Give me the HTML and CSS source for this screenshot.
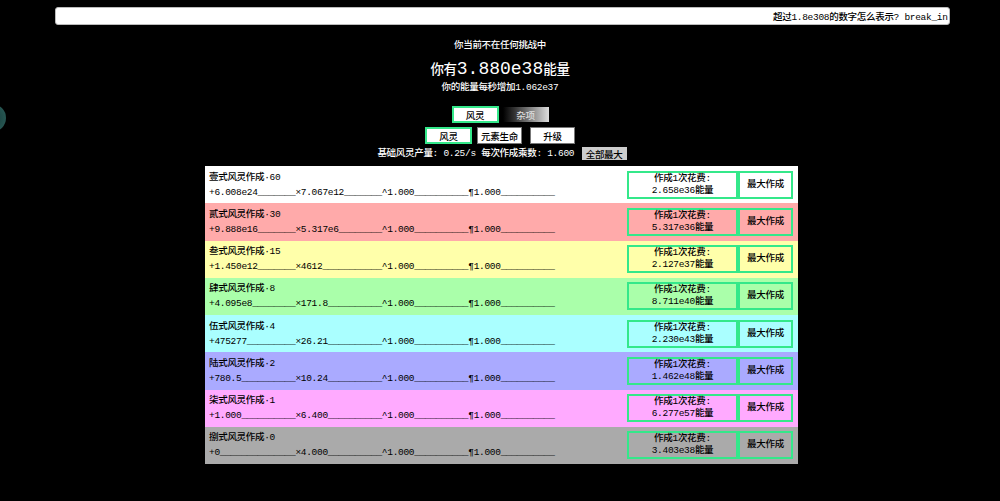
FILE: index.html
```html
<!DOCTYPE html>
<html lang="zh">
<head>
<meta charset="utf-8">
<title>风灵作成</title>
<link rel="stylesheet" href="styles.css">
</head>
<body>
<div class="orb"></div>
<div class="news"><span class="news-text">超过1.8e308的数字怎么表示? break_in</span></div>
<div class="header">
  <div class="line">你当前不在任何挑战中</div>
  <div class="energy">你有<span class="big">3.880e38</span>能量</div>
  <div class="line">你的能量每秒增加1.062e37</div>
</div>
<div class="tabs">
  <button class="tab active">风灵</button>
  <button class="tab grad">杂项</button>
</div>
<div class="tabs sub">
  <button class="tab active">风灵</button>
  <button class="tab plain">元素生命</button>
  <button class="tab plain">升级</button>
</div>
<div class="stats">基础风灵产量: 0.25/s 每次作成乘数: 1.600 <button class="maxall">全部最大</button></div>
<div class="table">
  <div class="row c1">
    <div class="info"><div class="name">壹式风灵作成·60</div><div class="nums">+6.008e24_______×7.067e12_______^1.000__________¶1.000__________</div></div>
    <button class="cost">作成1次花费:<br>2.658e36能量</button><button class="max">最大作成</button>
  </div>
  <div class="row c2">
    <div class="info"><div class="name">贰式风灵作成·30</div><div class="nums">+9.888e16_______×5.317e6________^1.000__________¶1.000__________</div></div>
    <button class="cost">作成1次花费:<br>5.317e36能量</button><button class="max">最大作成</button>
  </div>
  <div class="row c3">
    <div class="info"><div class="name">叁式风灵作成·15</div><div class="nums">+1.450e12_______×4612___________^1.000__________¶1.000__________</div></div>
    <button class="cost">作成1次花费:<br>2.127e37能量</button><button class="max">最大作成</button>
  </div>
  <div class="row c4">
    <div class="info"><div class="name">肆式风灵作成·8</div><div class="nums">+4.095e8________×171.8__________^1.000__________¶1.000__________</div></div>
    <button class="cost">作成1次花费:<br>8.711e40能量</button><button class="max">最大作成</button>
  </div>
  <div class="row c5">
    <div class="info"><div class="name">伍式风灵作成·4</div><div class="nums">+475277_________×26.21__________^1.000__________¶1.000__________</div></div>
    <button class="cost">作成1次花费:<br>2.230e43能量</button><button class="max">最大作成</button>
  </div>
  <div class="row c6">
    <div class="info"><div class="name">陆式风灵作成·2</div><div class="nums">+780.5__________×10.24__________^1.000__________¶1.000__________</div></div>
    <button class="cost">作成1次花费:<br>1.462e48能量</button><button class="max">最大作成</button>
  </div>
  <div class="row c7">
    <div class="info"><div class="name">柒式风灵作成·1</div><div class="nums">+1.000__________×6.400__________^1.000__________¶1.000__________</div></div>
    <button class="cost">作成1次花费:<br>6.277e57能量</button><button class="max">最大作成</button>
  </div>
  <div class="row c8">
    <div class="info"><div class="name">捌式风灵作成·0</div><div class="nums">+0______________×4.000__________^1.000__________¶1.000__________</div></div>
    <button class="cost">作成1次花费:<br>3.403e38能量</button><button class="max">最大作成</button>
  </div>
</div>
</body>
</html>
```
FILE: styles.css
```css
html, body {
  margin: 0;
  padding: 0;
  background: #000;
  color: #fff;
  font-family: "Liberation Mono", "Noto Sans CJK SC", monospace;
  font-size: 9.5px;
  font-weight: 500;
  letter-spacing: -0.3px;
}
body {
  height: 501px;
  overflow: hidden;
  padding-top: 7px;
  box-sizing: border-box;
}
button {
  font-family: inherit;
  font-size: inherit;
  font-weight: inherit;
  letter-spacing: inherit;
  color: #000;
  padding: 0;
  margin: 0;
  cursor: pointer;
}
.orb {
  position: absolute;
  left: -22px;
  top: 104px;
  width: 28px;
  height: 28px;
  border-radius: 50%;
  background: radial-gradient(circle at 50% 50%, #1a3a38 0, #1f4a47 40%, #2d605b 100%);
}
.news {
  margin: 0 50px 0 55px;
  height: 18px;
  background: #fff;
  border: 1px solid #bbb;
  border-radius: 3px;
  box-sizing: border-box;
  overflow: hidden;
  white-space: nowrap;
  color: #000;
  display: flex;
  align-items: center;
  padding-left: 717px;
}
.news-text { flex: none; }
.header {
  text-align: center;
  margin-top: 14px;
}
.line {
  height: 13px;
  line-height: 13px;
}
.energy {
  font-size: 13.5px;
  height: 24px;
  line-height: 24px;
  margin-top: 5px;
}
.big {
  font-size: 18px;
  letter-spacing: 0;
}
.tabs {
  display: flex;
  justify-content: center;
  gap: 4px;
  margin-top: 12px;
}
.tabs.sub {
  margin-top: 4px;
  gap: 5px;
}
.tab {
  height: 17px;
  width: 47px;
  box-sizing: border-box;
  background: #fff;
  border: 1px solid #777;
}
.tab.active {
  border: 2px solid #34e88a;
}
.tab.grad {
  width: 46px;
  height: 15px;
  margin-top: 1px;
  border: none;
  background: linear-gradient(to right, #000 0%, #333 25%, #ddd 100%);
  color: #ddd;
}
.tab.plain {
  width: 45px;
}
.tabs.sub .tab.plain:last-child {
  margin-left: 3px;
}
.stats {
  text-align: center;
  margin-top: 3px;
  height: 14px;
  line-height: 14px;
  padding-left: 4px;
}
.maxall {
  height: 13px;
  width: 45px;
  border: none;
  background: #ccc;
  vertical-align: top;
  margin-left: 2px;
}
.table {
  margin: 5px 0 0 205px;
  width: 593px;
  display: grid;
  grid-auto-rows: 37.25px;
  color: #000;
}
.row {
  display: flex;
  align-items: center;
  padding: 0 5px 0 4px;
}
.info {
  flex: 1;
  display: flex;
  flex-direction: column;
  gap: 2px;
}
.name, .nums {
  height: 13px;
  line-height: 13px;
  white-space: nowrap;
}
.cost, .max {
  height: 28px;
  border: 2px solid #34e88a;
  background: transparent;
  box-sizing: border-box;
  line-height: 12px;
}
.cost { width: 111px; }
.max { width: 55px; }
.c1 { background: #ffffff; }
.c2 { background: #ffaaaa; }
.c3 { background: #ffffaa; }
.c4 { background: #aaffaa; }
.c5 { background: #aaffff; }
.c6 { background: #aaaaff; }
.c7 { background: #ffaaff; }
.c8 { background: #aaaaaa; }
```
